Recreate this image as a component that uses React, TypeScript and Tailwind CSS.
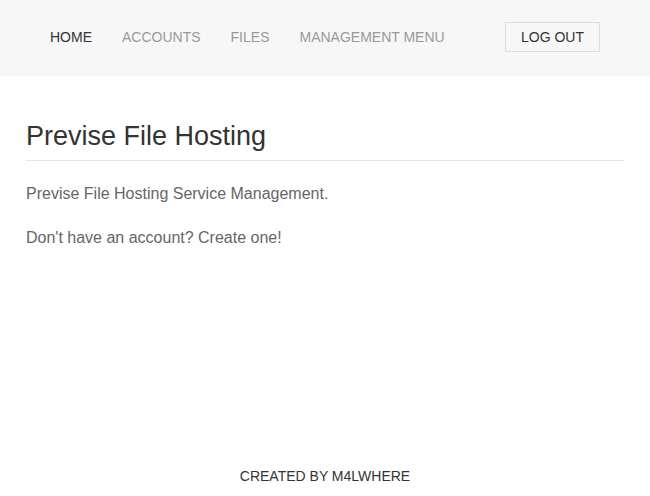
const navItems = [
  { label: "HOME", active: true },
  { label: "ACCOUNTS", active: false },
  { label: "FILES", active: false },
  { label: "MANAGEMENT MENU", active: false },
];

export default function App() {
  return (
    <div className="flex h-[496px] w-[650px] flex-col bg-white font-['Liberation_Sans',Arial,sans-serif]">
      <header className="flex h-[76px] items-center justify-between bg-[#f7f7f7] pb-[2px] pl-[35px] pr-[50px]">
        <nav className="flex items-center">
          {navItems.map((item) => (
            <a
              key={item.label}
              href="#"
              className={`px-[15px] text-[14px] leading-5 ${
                item.active ? "text-[#333]" : "text-[#999]"
              }`}
            >
              {item.label}
            </a>
          ))}
        </nav>

        <button className="h-[30px] border border-[#ddd] px-[15px] text-[14px] text-[#333]">
          LOG OUT
        </button>
      </header>

      <main className="flex-1 px-[26px] pt-[44px]">
        <h1 className="border-b border-[#e5e5e5] pb-[8px] text-[27px] leading-8 text-[#333]">
          Previse File Hosting
        </h1>

        <div className="space-y-[26px] pt-[24px] text-[16px] leading-[18px] text-[#666]">
          <p>Previse File Hosting Service Management.</p>
          <p>Don't have an account? Create one!</p>
        </div>
      </main>

      <footer className="pb-[9px] text-center text-[14px] text-[#333]">
        CREATED BY M4LWHERE
      </footer>
    </div>
  );
}
